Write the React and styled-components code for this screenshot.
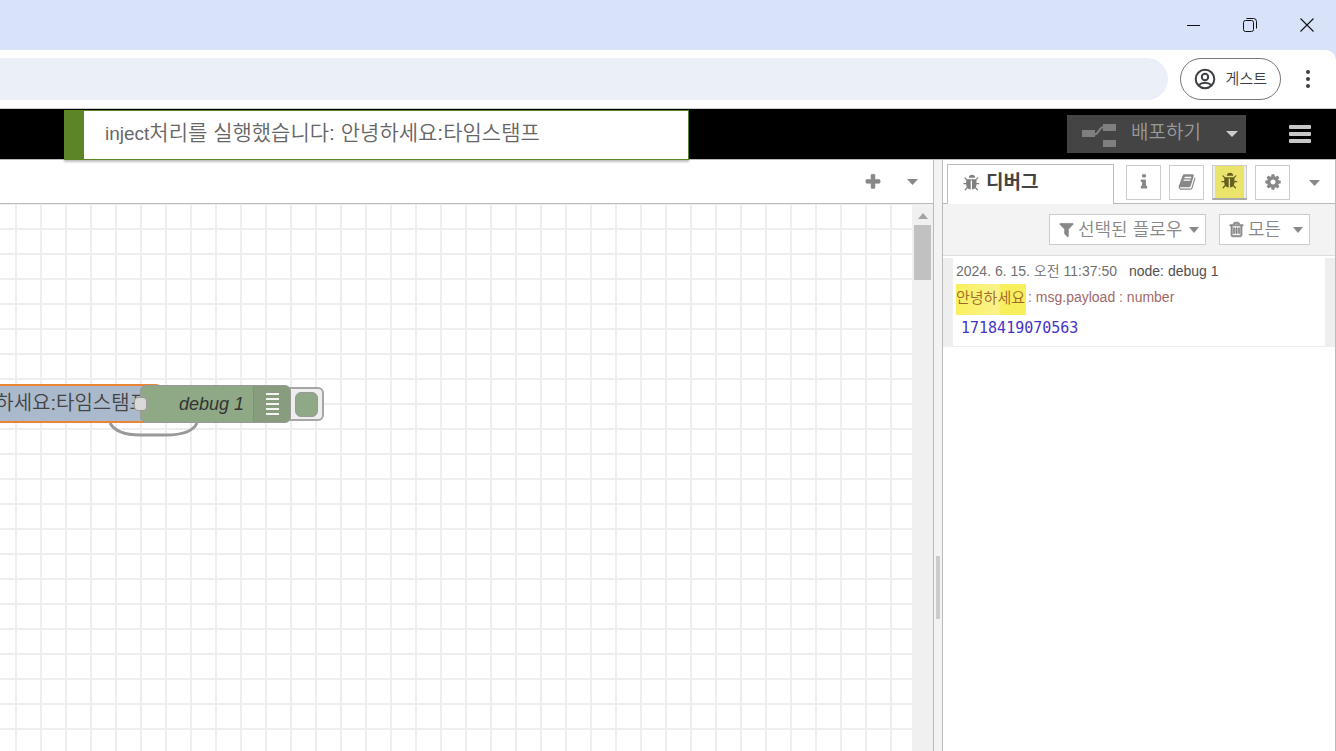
import React from "react";
import styled, { createGlobalStyle, css } from "styled-components";

const Global = createGlobalStyle`
  *, *::before, *::after { box-sizing: border-box; }
  body { margin: 0; background: #fff; font-family: "Liberation Sans", "Noto Sans CJK KR", sans-serif; font-size: 14px; color: #555; }
  button { margin: 0; padding: 0; border: 0; background: none; color: inherit; font: inherit; cursor: pointer; }
  svg { display: block; flex: none; }
`;

const ICONS = {
  bug: "M1632 960q0 26-19 45t-45 19h-224q0 171-67 290l208 209q19 19 19 45t-19 45q-18 19-45 19t-45-19l-198-197q-5 5-15 13t-42 28.5-65 36.5-82 29-97 13v-896h-128v896q-51 0-101.5-13.5t-87-33-66-39-43.5-32.5l-15-14-183 207q-20 21-48 21-24 0-43-16-19-18-20.5-44.5t15.5-46.5l202-227q-58-114-58-274h-224q-26 0-45-19t-19-45 19-45 45-19h224v-294l-173-173q-19-19-19-45t19-45 45-19 45 19l173 173h844l173-173q19-19 45-19t45 19 19 45-19 45l-173 173v294h224q26 0 45 19t19 45zm-416-576h-640q0-133 93.5-226.5t226.5-93.5 226.5 93.5 93.5 226.5z",
  cog: "M1152 896q0-106-75-181t-181-75-181 75-75 181 75 181 181 75 181-75 75-181zm512-109v222q0 12-8 23t-20 13l-185 28q-19 54-39 91 35 50 107 138 10 12 10 25t-9 23q-27 37-99 108t-94 71q-12 0-26-9l-138-108q-44 23-91 38-16 136-29 186-7 28-36 28h-222q-14 0-24.5-8.5t-11.5-21.5l-28-184q-49-16-90-37l-141 107q-10 9-25 9-14 0-25-11-126-114-165-168-7-10-7-23 0-12 8-23 15-21 51-66.5t54-70.5q-27-50-41-99l-183-27q-13-2-21-12.5t-8-23.5v-222q0-12 8-23t19-13l186-28q14-46 39-92-40-57-107-138-10-12-10-24 0-10 9-23 26-36 98.5-107.5t94.5-71.5q13 0 26 10l138 107q44-23 91-38 16-136 29-186 7-28 36-28h222q14 0 24.5 8.5t11.5 21.5l28 184q49 16 90 37l142-107q9-9 24-9 13 0 25 10 129 119 165 170 7 8 7 22 0 12-8 23-15 21-51 66.5t-54 70.5q26 50 41 98l183 28q13 2 21 12.5t8 23.5z",
  book: "M1703 478q40 57 18 129l-275 906q-19 64-76.5 107.5t-122.5 43.5h-923q-77 0-148.5-53.5t-99.5-131.5q-24-67-2-127 0-4 3-27t4-37q1-8-3-21.5t-3-19.5q2-11 8-21t16.5-23.5 16.5-23.5q23-38 45-91.5t30-91.5q3-10 .5-30t-.5-28q3-11 17-28t17-23q21-36 42-92t25-90q1-9-2.5-32t.5-28q4-13 22-30.5t22-22.5q19-26 42.5-84.5t27.5-96.5q1-8-3-25.5t-2-26.5q2-8 9-18t18-23 17-21q8-12 16.5-30.5t15-35 16-36 19.5-32 26.5-23.5 36-11.5 47.5 5.5l-1 3q38-9 51-9h761q74 0 114 56t18 130l-274 906q-36 119-71.5 153.5t-128.5 34.5h-869q-27 0-38 15-11 16-1 43 24 70 144 70h923q29 0 56-15.5t35-41.5l300-987q7-22 5-57 38 15 59 43zm-1064 2q-4 13 2 22.5t20 9.5h608q13 0 25.5-9.5t16.5-22.5l21-64q4-13-2-22.5t-20-9.5h-608q-13 0-25.5 9.5t-16.5 22.5zm-83 256q-4 13 2 22.5t20 9.5h608q13 0 25.5-9.5t16.5-22.5l21-64q4-13-2-22.5t-20-9.5h-608q-13 0-25.5 9.5t-16.5 22.5z",
  info: "M1216 1344v128q0 26-19 45t-45 19h-512q-26 0-45-19t-19-45v-128q0-26 19-45t45-19h64v-384h-64q-26 0-45-19t-19-45v-128q0-26 19-45t45-19h384q26 0 45 19t19 45v576h64q26 0 45 19t19 45zm-128-1152v192q0 26-19 45t-45 19h-256q-26 0-45-19t-19-45v-192q0-26 19-45t45-19h256q26 0 45 19t19 45z",
  filter: "M1595 295q17 41-14 70l-493 493v742q0 42-39 59-13 5-25 5-27 0-45-19l-256-256q-19-19-19-45v-486l-493-493q-31-29-14-70 17-39 59-39h1280q42 0 59 39z",
  trash: "M704 736v576q0 14-9 23t-23 9h-64q-14 0-23-9t-9-23v-576q0-14 9-23t23-9h64q14 0 23 9t9 23zm256 0v576q0 14-9 23t-23 9h-64q-14 0-23-9t-9-23v-576q0-14 9-23t23-9h64q14 0 23 9t9 23zm256 0v576q0 14-9 23t-23 9h-64q-14 0-23-9t-9-23v-576q0-14 9-23t23-9h64q14 0 23 9t9 23zm128 724v-948h-896v948q0 22 7 40.5t14.5 27 10.5 8.5h832q3 0 10.5-8.5t14.5-27 7-40.5zm-672-1076h448l-48-117q-7-9-17-11h-317q-10 2-17 11zm928 32v64q0 14-9 23t-23 9h-96v948q0 83-47 143.5t-113 60.5h-832q-66 0-113-58.5t-47-141.5v-952h-96q-14 0-23-9t-9-23v-64q0-14 9-23t23-9h309l70-167q15-37 54-63t79-26h320q40 0 79 26t54 63l70 167h309q14 0 23 9t9 23z",
  plus: "M1600 736v192q0 40-28 68t-68 28h-416v416q0 40-28 68t-68 28h-192q-40 0-68-28t-28-68v-416h-416q-40 0-68-28t-28-68v-192q0-40 28-68t68-28h416v-416q0-40 28-68t68-28h192q40 0 68 28t28 68v416h416q40 0 68 28t28 68z",
};

const Icon = ({ name, size = 18, bold = 0 }) => (
  <svg width={size} height={size} viewBox="0 0 1792 1792" fill="currentColor" stroke="currentColor" strokeWidth={bold} aria-hidden="true">
    <path d={ICONS[name]} />
  </svg>
);

const Caret = ({ width = 12 }) => (
  <svg width={width} height="6" viewBox="0 0 12 6" preserveAspectRatio="none" fill="currentColor" aria-hidden="true">
    <path d="M0 0h12L6 6z" />
  </svg>
);

const Page = styled.div`
  display: flex;
  flex-direction: column;
  height: 100vh;
  overflow: hidden;
`;

const TitleBar = styled.div`
  display: flex;
  justify-content: flex-end;
  height: 50px;
  flex: none;
  padding-right: 1px;
  background: #d8e2f9;
  color: #111;
`;

const WindowButton = styled.button`
  display: grid;
  place-items: center;
  width: 57px;
  height: 49px;
`;

const AddressRow = styled.div`
  background: #d8e2f9;
  flex: none;
`;

const AddressBar = styled.div`
  display: flex;
  align-items: center;
  height: 59px;
  padding-right: 18px;
  background: #fff;
  border-top-right-radius: 10px;
  border-bottom: 1px solid #c9cbcf;
`;

const AddressInput = styled.input`
  flex: 1;
  min-width: 0;
  height: 42px;
  padding: 0 20px;
  border: 0;
  border-radius: 0 21px 21px 0;
  background: #ebeff7;
`;

const GuestButton = styled.button`
  display: flex;
  align-items: center;
  gap: 10px;
  height: 42px;
  margin: 0 17px 0 12px;
  padding: 0 13px;
  border: 1px solid #747775;
  border-radius: 21px;
  color: #3c4043;
  font-size: 15px;
  line-height: 20px;
  font-weight: 350;
`;

const MoreButton = styled.button`
  display: grid;
  place-items: center;
  width: 20px;
  height: 40px;
  color: #3c4043;
`;

const Header = styled.header`
  position: relative;
  display: flex;
  align-items: center;
  justify-content: flex-end;
  gap: 43px;
  height: 50px;
  flex: none;
  padding-right: 25px;
  background: #000;
`;

const DeployGroup = styled.div`
  display: flex;
  align-items: center;
  height: 38px;
  background: #444;
`;

const DeployButton = styled.button`
  display: flex;
  align-items: center;
  gap: 15px;
  height: 38px;
  padding: 0 16px 2px 15px;
  color: #999;
  font-size: 19px;
  line-height: 28px;
  font-weight: 350;

  svg { margin-top: 4px; }
`;

const DeployMenu = styled.button`
  display: grid;
  place-items: center;
  width: 29px;
  height: 38px;
  color: #ccc;
`;

const MenuButton = styled.button`
  display: flex;
  flex-direction: column;
  gap: 3px;
  width: 22px;
`;

const MenuBar = styled.span`
  height: 4px;
  border-radius: 1px;
  background: #c7c7c7;
`;

const Notification = styled.div`
  position: absolute;
  left: 64px;
  top: 1px;
  z-index: 2;
  width: 625px;
  max-width: 60%;
  height: 50px;
  padding: 7px 20px 0 21px;
  border: 1px solid #5c8626;
  border-left-width: 20px;
  background: #fff;
  box-shadow: 0 2px 2px rgba(0, 0, 0, 0.25);
  color: #666;
  font-size: 21px;
  line-height: 30px;
  font-weight: 350;
  white-space: nowrap;
`;

const Latin = styled.span`
  font-size: 19px;
  font-weight: 400;
`;

const Main = styled.main`
  display: flex;
  flex: 1;
  min-height: 0;
`;

const panel = css`
  display: flex;
  flex-direction: column;
  border: 1px solid #bbb;
  border-bottom: 0;
`;

const Workspace = styled.section`
  ${panel}
  flex: 1;
  min-width: 0;
  border-left: 0;
`;

const TabBar = styled.div`
  display: flex;
  align-items: center;
  justify-content: flex-end;
  gap: 25px;
  height: 44px;
  flex: none;
  padding-right: 15px;
  border-bottom: 1px solid #bbb;
`;

const PlainButton = styled.button`
  display: grid;
  place-items: center;
  color: #888;
`;

const CanvasRow = styled.div`
  display: flex;
  flex: 1;
  min-height: 0;
`;

const Canvas = styled.div`
  position: relative;
  flex: 1;
  overflow: hidden;
  background-color: #fff;
  background-image: linear-gradient(#eee 2px, transparent 2px), linear-gradient(90deg, #eee 2px, transparent 2px);
  background-size: 25px 25px;
  background-position: 15px -1px;
`;

const ScrollTrack = styled.div`
  display: flex;
  flex-direction: column;
  align-items: center;
  gap: 6px;
  width: 21px;
  padding-top: 9px;
  background: #f0f0f0;
  color: #a3a3a3;

  svg { transform: rotate(180deg); }
`;

const ScrollThumb = styled.div`
  width: 17px;
  height: 55px;
  background: #c1c1c1;
`;

const Wire = styled.svg`
  position: absolute;
  left: 105px;
  top: 210px;
`;

const InjectNode = styled.div`
  position: absolute;
  left: -8px;
  top: 180px;
  width: 170px;
  height: 39px;
  padding-right: 12px;
  border: 2px solid #e98535;
  border-radius: 6px;
  background: #abb9cc;
  color: #444;
  font-size: 20px;
  line-height: 35px;
  font-weight: 350;
  text-align: right;
  white-space: nowrap;
`;

const DebugToggle = styled.button`
  position: absolute;
  left: 280px;
  top: 183px;
  display: flex;
  justify-content: flex-end;
  align-items: center;
  width: 44px;
  height: 34px;
  padding-right: 4px;
  border: 2px solid #a6a6a6;
  border-radius: 6px;
  background: #eee;
`;

const ToggleFace = styled.span`
  width: 23px;
  height: 25px;
  border: 1px solid #999;
  border-radius: 6px;
  background: #8fa885;
`;

const DebugNode = styled.div`
  position: absolute;
  left: 140px;
  top: 181px;
  display: flex;
  align-items: stretch;
  justify-content: flex-end;
  width: 151px;
  height: 38px;
  border: 1px solid #999;
  border-radius: 6px;
  background: #8fa885;
  color: #333;
  font-size: 18px;
  font-style: italic;
  line-height: 36px;
  overflow: hidden;
`;

const DebugBadge = styled.span`
  display: grid;
  place-items: center;
  width: 37px;
  margin-left: 9px;
  border-left: 1px solid #7f9676;
  background: #879d7d;
`;

const Port = styled.span`
  position: absolute;
  left: 134px;
  top: 193px;
  width: 13px;
  height: 14px;
  border: 1px solid #999;
  border-radius: 4px;
  background: #d9d9d9;
`;

const Separator = styled.div`
  display: flex;
  flex-direction: column;
  align-items: center;
  justify-content: center;
  width: 8px;
  padding-top: 264px;
  border-top: 1px solid #bbb;
  background: #f3f3f3;
`;

const Grip = styled.span`
  width: 4px;
  height: 63px;
  background: #ccc;
`;

const Sidebar = styled.aside`
  ${panel}
  width: 394px;
  flex: none;
`;

const SideTabs = styled.div`
  display: flex;
  align-items: flex-start;
  height: 44px;
  flex: none;
  padding: 4px 15px 0 4px;
  border-bottom: 1px solid #bbb;
`;

const ActiveTab = styled.button`
  display: flex;
  align-items: center;
  gap: 5px;
  width: 167px;
  height: 40px;
  padding: 0 15px 4px;
  border: 1px solid #bbb;
  border-bottom: 0;
  background: #fff;
  color: #808080;
`;

const TabLabel = styled.span`
  color: #444;
  font-size: 19px;
  line-height: 28px;
  font-weight: 700;
`;

const TabIcons = styled.div`
  display: flex;
  align-items: center;
  gap: 8px;
  flex: 1;
  margin: 1px 0 0 12px;

  & > :last-child { margin-left: auto; }
`;

const IconButton = styled.button`
  display: grid;
  place-items: center;
  width: 35px;
  height: 35px;
  padding-bottom: 2px;
  border: 1px solid #ccc;
  background: #fff;
  color: #888;
  ${(p) => p.$active && css`
    border-bottom: 2px solid #aaa;
    background: linear-gradient(#ebe46c, #ebe46c) center / 29px 100% no-repeat #eee;
    color: #655f22;
  `}
`;

const FilterBar = styled.div`
  display: flex;
  align-items: center;
  justify-content: flex-end;
  gap: 13px;
  height: 52px;
  flex: none;
  padding-right: 25px;
  border-bottom: 1px solid #ddd;
  background: #f3f3f3;
`;

const FilterButton = styled.button`
  display: flex;
  align-items: center;
  justify-content: space-between;
  min-width: ${(p) => p.$width}px;
  height: 31px;
  padding: 0 6px 0 8px;
  border: 1px solid #ccc;
  background: #fff;
  color: #888;
  font-size: 18px;
  line-height: 26px;
  font-weight: 350;
`;

const FilterLabel = styled.span`
  display: flex;
  align-items: center;
  gap: 3px;
`;

const Message = styled.article`
  margin-top: 2px;
  padding: 1px 3px 4px;
  border: solid #eee;
  border-width: 0 10px 1px;
`;

const MessageMeta = styled.div`
  display: flex;
  gap: 12px;
  color: #707070;
  line-height: 25px;
`;

const NodeName = styled.a`
  color: #505050;
  text-decoration: none;
`;

const Hangul = styled.span`
  font-weight: 350;
`;

const MessageTopic = styled.div`
  display: flex;
  gap: 2px;
  height: 31px;
  color: #a06a6a;
  line-height: 27px;
`;

const Highlight = styled.mark`
  padding: 0 1px 0 0;
  background: linear-gradient(90deg, #f9f05f, #faf38a 60%, #f8ef5c 65%);
  color: #a1662c;
  font-size: 15px;
  font-weight: 350;
`;

const Payload = styled.div`
  padding: 0 5px;
  color: #4434c8;
  font-family: "DejaVu Sans Mono", monospace;
  font-size: 15px;
  line-height: 27px;
`;

export default function App() {
  return (
    <Page>
      <Global />
      <TitleBar>
        <WindowButton aria-label="최소화">
          <svg width="14" height="14" viewBox="0 0 14 14" stroke="currentColor"><path d="M1 7.5h13" /></svg>
        </WindowButton>
        <WindowButton aria-label="창 복원">
          <svg width="14" height="14" viewBox="0 0 14 14" fill="none" stroke="currentColor">
            <rect x="0.5" y="2.5" width="10" height="11" rx="2" />
            <path d="M3.5 0.5h7a3 3 0 0 1 3 3v7" />
          </svg>
        </WindowButton>
        <WindowButton aria-label="닫기">
          <svg width="14" height="14" viewBox="0 0 14 14" stroke="currentColor" strokeWidth="1.1"><path d="M.5.5l13 13M13.500.5l-13 13" /></svg>
        </WindowButton>
      </TitleBar>
      <AddressRow>
        <AddressBar>
          <AddressInput aria-label="주소창" />
          <GuestButton>
            <svg width="22" height="22" viewBox="0 0 22 22" fill="none" stroke="currentColor" strokeWidth="2">
              <circle cx="11" cy="11" r="9.300" />
              <circle cx="11" cy="9" r="3.200" />
              <path d="M4.500 17.300c3.600-3.300 9.400-3.300 13 0" />
            </svg>
            게스트
          </GuestButton>
          <MoreButton aria-label="메뉴">
            <svg width="4" height="18" viewBox="0 0 4 18" fill="currentColor">
              <circle cx="2" cy="2" r="2" /><circle cx="2" cy="9" r="2" /><circle cx="2" cy="16" r="2" />
            </svg>
          </MoreButton>
        </AddressBar>
      </AddressRow>
      <Header>
        <Notification role="status"><Latin>inject</Latin>처리를 실행했습니다: 안녕하세요:타임스탬프</Notification>
        <DeployGroup>
          <DeployButton>
            <svg width="34" height="24" viewBox="0 0 34 24" fill="#7f7f7f">
              <path d="M0 7h13v7H0zM21 1h13v7H21zM21 17h13v7H21z" />
              <path d="M12 11.500C18 11.500 16 4 22 4" fill="none" stroke="#7f7f7f" strokeWidth="2" />
            </svg>
            배포하기
          </DeployButton>
          <DeployMenu aria-label="배포 옵션"><Caret /></DeployMenu>
        </DeployGroup>
        <MenuButton aria-label="주 메뉴"><MenuBar /><MenuBar /><MenuBar /></MenuButton>
      </Header>
      <Main>
        <Workspace>
          <TabBar>
            <PlainButton aria-label="플로우 추가"><Icon name="plus" bold={60} /></PlainButton>
            <PlainButton aria-label="플로우 목록"><Caret width={11} /></PlainButton>
          </TabBar>
          <CanvasRow>
            <Canvas>
              <Wire width="100" height="25" viewBox="0 0 100 25" fill="none" stroke="#999" strokeWidth="3">
                <path d="M5 9C10 18 22 21 35 21H61C76 21 88 18 92 9" />
              </Wire>
              <InjectNode>하세요:타임스탬프</InjectNode>
              <DebugToggle aria-label="디버그 출력 전환"><ToggleFace /></DebugToggle>
              <DebugNode>
                debug 1
                <DebugBadge>
                  <svg width="13" height="22" viewBox="0 0 13 22" stroke="#f4f4f4" strokeWidth="2">
                    <path d="M0 1h13M0 6h13M0 11h13M0 16h13M0 21h13" />
                  </svg>
                </DebugBadge>
              </DebugNode>
              <Port />
            </Canvas>
            <ScrollTrack><Caret width={10} /><ScrollThumb /></ScrollTrack>
          </CanvasRow>
        </Workspace>
        <Separator><Grip /></Separator>
        <Sidebar>
          <SideTabs>
            <ActiveTab><Icon name="bug" /><TabLabel>디버그</TabLabel></ActiveTab>
            <TabIcons>
              <IconButton aria-label="정보"><Icon name="info" /></IconButton>
              <IconButton aria-label="도움말"><Icon name="book" /></IconButton>
              <IconButton aria-label="디버그" $active><Icon name="bug" /></IconButton>
              <IconButton aria-label="설정"><Icon name="cog" /></IconButton>
              <PlainButton aria-label="사이드바 목록"><Caret width={11} /></PlainButton>
            </TabIcons>
          </SideTabs>
          <FilterBar>
            <FilterButton $width={157}>
              <FilterLabel><Icon name="filter" size={17} bold={80} />선택된 플로우</FilterLabel><Caret width={10} />
            </FilterButton>
            <FilterButton $width={91}>
              <FilterLabel><Icon name="trash" size={17} bold={80} />모든</FilterLabel><Caret width={10} />
            </FilterButton>
          </FilterBar>
          <Message>
            <MessageMeta>
              <span>2024. 6. 15. <Hangul>오전</Hangul> 11:37:50</span>
              <NodeName href="#debug-1">node: debug 1</NodeName>
            </MessageMeta>
            <MessageTopic><Highlight>안녕하세요</Highlight><span>: msg.payload : number</span></MessageTopic>
            <Payload>1718419070563</Payload>
          </Message>
        </Sidebar>
      </Main>
    </Page>
  );
}
